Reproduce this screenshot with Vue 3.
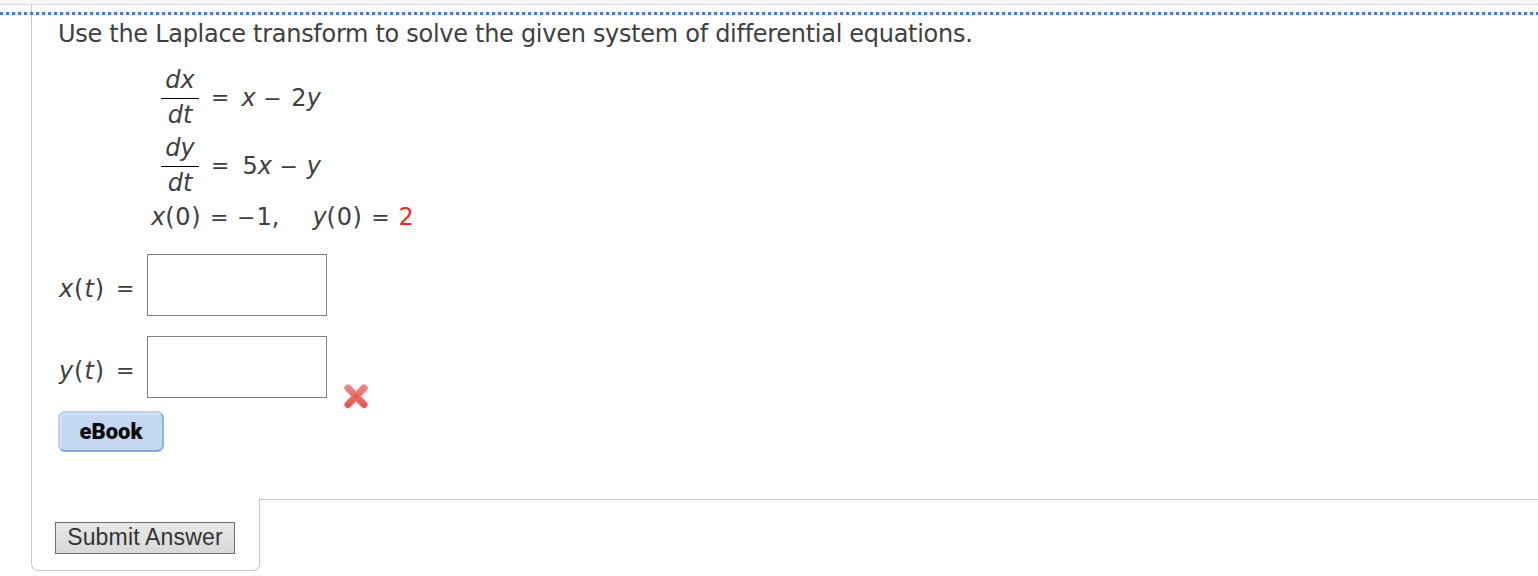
<template>
  <div class="page">
    <div class="topbar"></div>
    <div class="dots"></div>

    <div class="question">
      <p class="prompt">Use the Laplace transform to solve the given system of differential equations.</p>

      <div v-for="e in equations" :key="e.top" class="equation">
        <div class="fraction">
          <i class="num">{{ e.top }}</i>
          <i class="den">dt</i>
        </div>
        <span class="op eq">=</span>
        <span v-if="e.top === 'dx'" class="rhs"><i>x</i> <span class="op minus">−</span> 2<i>y</i></span>
        <span v-else class="rhs second">5<i>x</i> <span class="op minus">−</span> <i>y</i></span>
      </div>

      <div class="initial">
        <span class="ic-x"><i>x</i><span class="args">(0)</span> <span class="op">=</span> <span class="op">−</span>1,</span>
        <span class="ic-y"><i>y</i><span class="args">(0)</span> <span class="op">=</span> <span class="red">2</span></span>
      </div>

      <div class="answer">
        <label for="xt"><i>x</i>(<i>t</i>)</label>
        <span class="op sign">=</span>
        <input id="xt" v-model="xt" />
      </div>
      <div class="answer">
        <label for="yt"><i>y</i>(<i>t</i>)</label>
        <span class="op sign">=</span>
        <input id="yt" v-model="yt" />
        <svg class="wrong" width="26" height="26" viewBox="0 0 26 26">
          <defs>
            <linearGradient id="cross" x1="0" y1="0" x2="0" y2="26" gradientUnits="userSpaceOnUse">
              <stop offset="0" stop-color="#f08c88" />
              <stop offset="0.55" stop-color="#ea6966" />
              <stop offset="1" stop-color="#e3504c" />
            </linearGradient>
          </defs>
          <path d="M5 5L21 21.5M21 5L5 21.5" stroke="#fbdcda" stroke-width="8.6" stroke-linecap="round" />
          <path d="M5 5L21 21.5M21 5L5 21.5" stroke="url(#cross)" stroke-width="6.8" stroke-linecap="round" />
          <path d="M10 13L13 10L16 13L13 16Z" fill="#e65a57" />
        </svg>
      </div>

      <button class="ebook">eBook</button>
    </div>

    <div class="footer">
      <div class="submit-box">
        <button class="submit">Submit Answer</button>
      </div>
      <div class="rule"></div>
    </div>
  </div>
</template>

<script setup>
import { ref } from 'vue'

const xt = ref('')
const yt = ref('')

const equations = [{ top: 'dx' }, { top: 'dy' }]
</script>

<style>
body {
  margin: 0;
  background: #fff;
}
</style>

<style scoped>
.page {
  position: relative;
  height: 576px;
  overflow: hidden;
  font-family: "DejaVu Sans", Verdana, sans-serif;
  font-size: 24px;
  line-height: 30px;
  color: #404040;
  white-space: nowrap;
}
.topbar {
  box-sizing: border-box;
  height: 5px;
  background: #f5f5f5;
  border-bottom: 1px solid #d8d8d8;
}
.dots {
  position: absolute;
  top: 12px;
  left: 0;
  right: 0;
  height: 3px;
  background: repeating-linear-gradient(90deg, #3b7fd9 0 3px, #d3e3f7 3px 4px, #fff 4px 6px);
}
.question {
  box-sizing: border-box;
  height: 493px;
  margin-left: 31px;
  padding: 14px 0 0 26px;
  border-left: 1px solid #c8c8c8;
}
.prompt {
  margin: 0 0 15px;
  letter-spacing: -0.29px;
}
.op {
  font-size: 22px;
}
.equation {
  display: flex;
  align-items: flex-start;
  height: 68px;
  padding-left: 103px;
}
.fraction {
  display: flex;
  flex-direction: column;
  width: 38px;
  text-align: center;
}
.num {
  box-sizing: border-box;
  height: 35px;
  padding-top: 1px;
  border-bottom: 1px solid #000;
}
.den {
  padding-top: 1px;
}
.eq {
  margin: 19px 0 0 12px;
}
.rhs {
  margin: 19px 0 0 12px;
}
.minus {
  margin: 0 2px 0 0;
}
.rhs.second {
  margin-left: 13px;
}
.second .minus {
  margin-right: 1px;
}
.initial {
  display: flex;
  height: 30px;
  margin: 2px 0 22px 93px;
}
.args {
  margin-right: 1px;
  letter-spacing: 0.7px;
}
.initial .op {
  margin-right: 1px;
}
.ic-y {
  margin-left: 33px;
}
.red {
  color: #ee2a1e;
}
.answer {
  display: flex;
  height: 62px;
  margin-bottom: 20px;
}
.answer label {
  width: 57px;
  margin-top: 20px;
  padding-left: 1px;
  letter-spacing: 0.9px;
}
.sign {
  width: 31px;
  margin-top: 20px;
}
.answer input {
  box-sizing: border-box;
  width: 180px;
  height: 62px;
  padding: 4px 8px;
  font: inherit;
  border: 1px solid #808080;
  border-radius: 0;
  outline: none;
}
.wrong {
  margin: 47px 0 0 16px;
  fill: none;
}
.ebook {
  display: block;
  box-sizing: border-box;
  width: 106px;
  height: 41px;
  margin-top: -7px;
  padding: 0;
  font: 900 22px/37px Roboto, "Liberation Sans", sans-serif;
  color: #0a0a0a;
  background: #c3d7f1;
  border: 2px solid;
  border-color: #b9d0f0 #94b1d9 #86a4cf #b9d0f0;
  border-radius: 7px;
  box-shadow: inset 2px 2px 1px #d3e3f8;
}
.footer {
  display: flex;
  margin-left: 31px;
}
.submit-box {
  box-sizing: border-box;
  width: 229px;
  height: 73px;
  padding: 24px 0 0 23px;
  border: 1px solid #c8c8c8;
  border-top: 0;
  border-radius: 0 0 7px 7px;
}
.submit {
  display: block;
  box-sizing: border-box;
  width: 180px;
  height: 32px;
  padding: 0 0 2px;
  font: 23px/28px "Liberation Sans", Arial, sans-serif;
  letter-spacing: 0.18px;
  color: #333;
  background: linear-gradient(#e8e8e8, #d8d8d8);
  border: 1px solid #6f6f6f;
  border-radius: 0;
}
.rule {
  flex: 1;
  height: 1px;
  margin-top: 1px;
  background: #c8c8c8;
}
</style>
